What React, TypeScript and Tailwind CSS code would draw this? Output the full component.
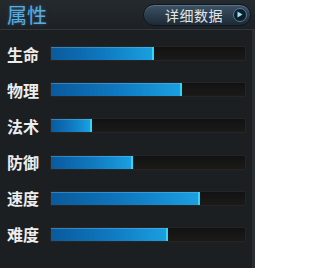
const stats = [
  { name: "生命", value: 103 },
  { name: "物理", value: 131 },
  { name: "法术", value: 41 },
  { name: "防御", value: 82 },
  { name: "速度", value: 149 },
  { name: "难度", value: 117 },
];

function StatRow({ name, value }: { name: string; value: number }) {
  return (
    <div className="flex items-center h-[15px]">
      <div className="w-[50px] pl-[7px] text-[16px] leading-none font-semibold text-[#ededed] whitespace-nowrap">
        {name}
      </div>
      <div className="w-[196px] h-[15px] bg-gradient-to-b from-[#121212] to-[#1b1a19] border border-[#262524] box-border">
        <div
          className="h-full bg-gradient-to-r from-[#0a5a9c] via-[#0f78bf] to-[#1b9fe0] border-r-2 border-[#33d6f2] shadow-[inset_0_1px_0_rgba(120,200,255,0.35)]"
          style={{ width: `${value}px` }}
        />
      </div>
    </div>
  );
}

export default function App() {
  return (
    <div className="w-[255px] h-[268px] bg-[#1c1f22] font-['Noto_Sans_CJK_SC',sans-serif] flex flex-col overflow-hidden">
      <div className="h-[30px] shrink-0 flex items-center justify-between pl-[7px] pr-[4px] bg-gradient-to-b from-[#252a2f] to-[#1d2125] border-b border-[#30363b]">
        <div className="text-[20px] leading-none text-[#58ace0] [text-shadow:0_0_3px_rgba(60,140,200,0.5)]">
          属性
        </div>
        <div className="w-[108px] h-[22px] rounded-full bg-gradient-to-b from-[#3d5365] to-[#1c2a36] border border-[#0f161c] flex items-center justify-end pr-[3px] gap-[10px] shadow-[inset_0_1px_0_rgba(140,180,210,0.35)]">
          <span className="text-[14px] leading-none text-[#e2e6ea] tracking-[0.5px]">详细数据</span>
          <span className="w-[14px] h-[14px] rounded-full bg-[#0c1e2c] border border-[#5a7c92] flex items-center justify-center">
            <svg width="6" height="7" viewBox="0 0 6 7">
              <path d="M0.5 0.5 L5.5 3.5 L0.5 6.5 Z" fill="#9fe0f4" />
            </svg>
          </span>
        </div>
      </div>
      <div className="flex-1 flex border-r-[3px] border-[#2a2e32]">
        <div className="flex flex-col gap-[21.2px] pt-[16px]">
          {stats.map((s) => (
            <StatRow key={s.name} name={s.name} value={s.value} />
          ))}
        </div>
      </div>
    </div>
  );
}
